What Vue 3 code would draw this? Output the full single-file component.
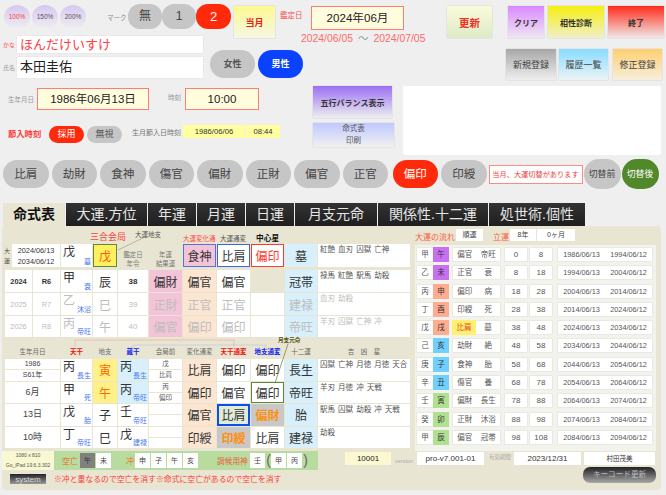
<script setup>
const stars = ['比肩', '劫財', '食神', '傷官', '偏財', '正財', '偏官', '正官', '偏印', '印綬']
const tabs = ['命式表', '大運.方位', '年運', '月運', '日運', '月支元命', '関係性.十二運', '処世術.個性']

// 年運の3行
const yearRows = [
  { year: '2024', wareki: 'R6', gan: '甲', un: '衰', zhi: '辰', age: '38', a: '偏財', b: '偏官', c: '偏官', e: '冠帯', lucky: '禄馬 紅艶 駅馬 劫殺', muted: false },
  { year: '2025', wareki: 'R7', gan: '乙', un: '沐浴', zhi: '巳', age: '39', a: '正財', b: '正官', c: '正官', e: '建禄', lucky: '血刃 劫殺', muted: true },
  { year: '2026', wareki: 'R8', gan: '丙', un: '帝旺', zhi: '午', age: '40', a: '偏官', b: '偏印', c: '偏印', e: '帝旺', lucky: '羊刃 囚獄 亡神 冲', muted: true }
]

// 命式本体
const birthRows = [
  { label: ['1986', 'S61年'], gan: '丙', un: '長生', zhi: '寅', zhiHot: true, zokan: '丙', zokanUn: '長生', zokanBlue: true, pre: ['戊', '比肩'], a: '比肩', b: '偏印', c: '偏印', e: '長生', lucky: '囚獄 亡神 月徳 月徳 天合' },
  { label: ['6月'], gan: '甲', un: '死', zhi: '午', zhiHot: true, zokan: '丙', zokanUn: '帝旺', zokanBlue: true, pre: ['丙', '偏印'], a: '偏印', b: '偏官', c: '偏印', cClass: 'green-box', e: '帝旺', lucky: '羊刃 月徳 冲 天戦' },
  { label: ['13日'], gan: '戊', un: '胎', zhi: '子', zokan: '壬', zokanUn: '帝旺', pre: ['', ''], a: '偏官', b: '比肩', bClass: 'blue-box', c: '偏財', cClass: 'hit', e: '胎', lucky: '駅馬 囚獄 劫殺 冲 天戦' },
  { label: ['10時'], gan: '丁', un: '帝旺', zhi: '巳', zokan: '戊', zokanUn: '建禄', pre: ['', ''], a: '印綬', b: '印綬', bClass: 'hit', c: '比肩', e: '建禄', lucky: '劫殺' }
]

// 大運の流れ
const flow = [
  ['甲', '午', 'purple', '偏官', '帝旺', 0, 8, '1986/06/13', '1994/06/12'],
  ['乙', '未', 'purple', '正官', '衰', 8, 18, '1994/06/13', '2004/06/12'],
  ['丙', '申', 'salmon', '偏印', '病', 18, 28, '2004/06/13', '2014/06/12'],
  ['丁', '酉', 'salmon', '印綬', '死', 28, 38, '2014/06/13', '2024/06/12'],
  ['戊', '戌', 'salmon', '比肩', '墓', 38, 48, '2024/06/13', '2034/06/12'],
  ['己', '亥', 'cyan', '劫財', '絶', 48, 58, '2034/06/13', '2044/06/12'],
  ['庚', '子', 'cyan', '食神', '胎', 58, 68, '2044/06/13', '2054/06/12'],
  ['辛', '丑', 'cyan', '傷官', '養', 68, 78, '2054/06/13', '2064/06/12'],
  ['壬', '寅', 'green', '偏財', '長生', 78, 88, '2064/06/13', '2074/06/12'],
  ['癸', '卯', 'green', '正財', '沐浴', 88, 98, '2074/06/13', '2084/06/12'],
  ['甲', '辰', 'green', '偏官', '冠帯', 98, 108, '2084/06/13', '2094/06/12']
]
</script>

<template>
  <div class="page">
    <!-- 上段 -->
    <div class="row-one">
      <div class="zoom-btn red-text">100%</div>
      <div class="zoom-btn">150%</div>
      <div class="zoom-btn">200%</div>
      <span class="mark-label">マーク</span>
      <div class="mark-seg">
        <span>無</span>
        <span>1</span>
        <span class="on">2</span>
      </div>
      <div class="btn this-month">当月</div>
      <span class="date-label">鑑定日</span>
      <div class="date-col">
        <div class="date-box">2024年06月</div>
        <div class="date-range">2024/06/05<i>～</i>2024/07/05</div>
      </div>
      <div class="btn refresh">更新</div>
      <div class="btn clear">クリア</div>
      <div class="btn match">相性診断</div>
      <div class="btn finish">終了</div>
    </div>

    <div class="row-two">
      <div class="names">
        <div class="name-line kana">
          <label>かな</label>
          <div class="name-input">ほんだけいすけ</div>
        </div>
        <div class="name-line kanji">
          <label>氏名</label>
          <div class="name-input">本田圭佑</div>
        </div>
      </div>
      <div class="gender">女性</div>
      <div class="gender male">男性</div>
      <div class="reg-btns">
        <div class="btn new">新規登録</div>
        <div class="btn history">履歴一覧</div>
        <div class="btn fix">修正登録</div>
      </div>
    </div>

    <div class="row-three">
      <div class="birth-col">
        <div class="birth-line">
          <span class="birth-label">生年月日</span>
          <div class="birth-box">1986年06月13日</div>
          <span class="time-label">時刻</span>
          <div class="time-box">10:00</div>
        </div>
        <div class="setsu-line">
          <span class="setsu-label">節入時刻</span>
          <span class="setsu-pill on">採用</span>
          <span class="setsu-pill">無視</span>
          <span class="setsu-sub">生月節入日時刻</span>
          <span class="setsu-date">1986/06/06</span>
          <span class="setsu-time">08:44</span>
        </div>
      </div>
      <div class="mid-col">
        <div class="btn gogyo">五行バランス表示</div>
        <div class="btn print">命式表<br />印刷</div>
      </div>
      <div class="memo"></div>
    </div>

    <div class="star-row">
      <div v-for="s in stars" :key="s" class="star-pill" :class="{ on: s === '偏印' }">{{ s }}</div>
      <div class="notice">当月、大運切替があります</div>
      <div class="switch">切替前</div>
      <div class="switch after">切替後</div>
    </div>

    <div class="tabs">
      <div v-for="(t, i) in tabs" :key="t" class="tab" :class="{ active: i === 0 }">{{ t }}</div>
    </div>

    <div class="panel">
      <svg class="lines" width="659" height="264">
        <polyline points="116,24 143,11" fill="none" stroke="#a0a090" stroke-width="0.7" />
        <polyline points="73,121 73,114 232,114 232,121" fill="none" stroke="#efb4a8" stroke-width="0.8" />
        <polyline points="131,124 131,119 264,119 264,124" fill="none" stroke="#c8c8e0" stroke-width="0.8" />
        <polyline points="286,118 273,157" fill="none" stroke="#7f8a52" stroke-width="0.8" />
      </svg>

      <div class="panel-main">
        <div class="left-area">
          <!-- 大運・年運 -->
          <div class="grid upper">
            <div class="cap sango">三合会局</div>
            <div class="cap chishi">大運地支</div>
            <div class="cap henka">大運変化通</div>
            <div class="cap tsuhen">大運通変</div>
            <div class="cap center-star">中心星</div>

            <div class="dayun-cell">
              <span class="dayun-label">大<br />運</span>
              <div class="dayun-dates">2024/06/13<br />2034/06/12</div>
            </div>
            <div class="cell gan first"><b>戊</b><small>墓</small></div>
            <div class="cell big first sango-box">戊</div>
            <div class="side-label first">鑑定日<br />年令</div>
            <div class="side-label first">年運<br />結果運</div>
            <div class="cell big first pink blue-line">食神</div>
            <div class="cell big first blue-box-thin">比肩</div>
            <div class="cell big first red-box">偏印</div>
            <div class="cell big first sky">墓</div>
            <div class="cell lucky first">紅艶 血刃 囚獄 亡神</div>

            <template v-for="r in yearRows" :key="r.year">
              <div class="cell num" :class="{ muted: r.muted }">{{ r.year }}</div>
              <div class="cell num" :class="{ muted: r.muted }">{{ r.wareki }}</div>
              <div class="cell gan" :class="{ muted: r.muted }"><b>{{ r.gan }}</b><small>{{ r.un }}</small></div>
              <div class="cell big" :class="{ muted: r.muted }">{{ r.zhi }}</div>
              <div class="cell num age" :class="{ muted: r.muted }">{{ r.age }}</div>
              <div class="cell big pink" :class="{ muted: r.muted }">{{ r.a }}</div>
              <div class="cell big peach" :class="{ muted: r.muted }">{{ r.b }}</div>
              <div class="cell big" :class="{ muted: r.muted }">{{ r.c }}</div>
              <div class="cell" :class="{ blank: !r.muted }"></div>
              <div class="cell big sky" :class="{ muted: r.muted }">{{ r.e }}</div>
              <div class="cell lucky" :class="{ muted: r.muted }">{{ r.lucky }}</div>
            </template>
          </div>

          <!-- 命式 -->
          <div class="grid lower">
            <div class="cap gesshi">月支元命</div>
            <div class="head wide">生年月日</div>
            <div class="head red">天干</div>
            <div class="head">地支</div>
            <div class="head blue">蔵干</div>
            <div class="head">会局前</div>
            <div class="head">変化通変</div>
            <div class="head red">天干通変</div>
            <div class="head blue">地支通変</div>
            <div class="head">十二運</div>
            <div class="head spaced">吉　凶　星</div>

            <template v-for="r in birthRows" :key="r.gan + r.zhi">
              <div class="date-part">
                <div v-for="l in r.label" :key="l" class="date-piece" :class="{ single: r.label.length === 1 }">{{ l }}</div>
              </div>
              <div class="cell gan"><b>{{ r.gan }}</b><small>{{ r.un }}</small></div>
              <div class="cell big" :class="{ hot: r.zhiHot }">{{ r.zhi }}</div>
              <div class="cell gan" :class="{ sky: r.zokanBlue }"><b>{{ r.zokan }}</b><small>{{ r.zokanUn }}</small></div>
              <div class="pre-part">
                <div v-for="(p, i) in r.pre" :key="i" class="pre-piece">{{ p }}</div>
              </div>
              <div class="cell big peach">{{ r.a }}</div>
              <div class="cell big" :class="r.bClass">{{ r.b }}</div>
              <div class="cell big" :class="r.cClass">{{ r.c }}</div>
              <div class="cell big sky">{{ r.e }}</div>
              <div class="cell lucky">{{ r.lucky }}</div>
            </template>
          </div>
        </div>

        <div class="right-area">
          <div class="flow-head">
            <span class="flow-label">大運の流れ</span>
            <span class="flow-val w27">順運</span>
            <span class="flow-label second">立運</span>
            <span class="flow-val w26">8年</span>
            <span class="flow-val w38">0ヶ月</span>
          </div>
          <div class="flow-list">
            <div v-for="f in flow" :key="f[7]" class="flow-row">
              <div class="chip pair">
                <span>{{ f[0] }}</span>
                <span class="zhi" :class="f[2]">{{ f[1] }}</span>
              </div>
              <div class="chip pair stars-pair">
                <span :class="{ 'star-hit': f[3] === '比肩' }">{{ f[3] }}</span>
                <span>{{ f[4] }}</span>
              </div>
              <div class="chip age-chip">{{ f[5] }}</div>
              <div class="chip age-chip second">{{ f[6] }}</div>
              <div class="chip dates">
                <span>{{ f[7] }}</span>
                <span>{{ f[8] }}</span>
              </div>
            </div>
          </div>
        </div>
      </div>

      <div class="panel-foot">
        <div class="foot-left">
          <div class="info-line">
            <div class="device">
              <div>1080 x 810</div>
              <div>Go_iPad 19.6.3.302</div>
            </div>
            <div class="kubo">
              <span class="kubo-label">空亡</span>
              <span class="kubo-cell dark">午</span>
              <span class="kubo-cell">未</span>
              <span class="kubo-label chu">冲</span>
              <span class="kubo-cell">申</span>
              <span class="kubo-cell">子</span>
              <span class="kubo-cell">午</span>
              <span class="kubo-cell">亥</span>
              <span class="kubo-sub">調候用神</span>
              <span class="kubo-cell">壬</span>
              <span class="paren">(</span>
              <span class="kubo-cell">甲</span>
              <span class="kubo-cell">丙</span>
              <span class="paren">)</span>
            </div>
          </div>
          <div class="note-line">
            <div class="system-btn">system</div>
            <div class="note">※冲と重なるので空亡を消す※命式に空亡があるので空亡を消す</div>
          </div>
        </div>
        <div class="foot-right">
          <div class="serial-line">
            <span class="serial">10001</span>
            <span class="tiny ver">version</span>
            <span class="plain ver-val">pro-v7.001-01</span>
            <span class="tiny limit">有効期限</span>
            <span class="plain limit-val">2023/12/31</span>
            <span class="plain owner">村田茂美</span>
          </div>
          <div class="key-btn">キーコード更新</div>
        </div>
      </div>
    </div>
  </div>
</template>

<style>
html,
body {
  margin: 0;
  background: #efefef;
  overflow: hidden;
}
</style>

<style scoped>
.page {
  width: 666px;
  height: 495px;
  overflow: hidden;
  background: #efefef;
  color: #333;
  font-family: "Liberation Sans", "Noto Sans CJK JP", sans-serif;
}
.btn {
  display: flex;
  align-items: center;
  justify-content: center;
  text-align: center;
  box-shadow: 0 0 1px rgba(0, 0, 0, 0.25);
}

/* 1段目 */
.row-one {
  display: flex;
  align-items: flex-start;
  height: 36px;
  padding-left: 4px;
  box-sizing: border-box;
}
.zoom-btn {
  width: 26px;
  height: 24px;
  margin: 5px 2px 0 0;
  border-radius: 50%;
  background: linear-gradient(#d6c8f2, #efeef0);
  font-size: 6.5px;
  line-height: 24px;
  text-align: center;
  color: #555;
}
.red-text {
  color: #ff3a3a;
}
.mark-label {
  margin: 12px 2px 0 19px;
  font-size: 6.5px;
  width: 19px;
  white-space: nowrap;
  color: #888;
}
.mark-seg {
  display: flex;
  margin-top: 4px;
  height: 25px;
}
.mark-seg span {
  width: 34px;
  background: #c6c6c6;
  border-radius: 12px;
  text-align: center;
  font-size: 12px;
  line-height: 25px;
  color: #444;
}
.mark-seg .on {
  width: 35px;
  background: #ff2a0c;
  font-size: 13px;
  color: #fff;
}
.this-month {
  width: 41px;
  height: 32px;
  margin: 6px 0 0 3px;
  background: linear-gradient(#fdf990, #f6f6e6);
  color: #e82020;
  font-size: 9px;
  font-weight: bold;
}
.date-label {
  width: 23px;
  margin: 9px 0 0 5px;
  font-size: 7.5px;
  white-space: nowrap;
  color: #f45050;
}
.date-col {
  width: 93px;
  margin: 6px 0 0 8px;
}
.date-box {
  height: 24px;
  box-sizing: border-box;
  border: 1px solid #ff7c70;
  background: #fffdde;
  font-size: 11.6px;
  line-height: 22px;
  text-align: center;
  color: #222;
}
.date-range {
  margin: 3px 0 0 -10px;
  white-space: nowrap;
  font-size: 10.4px;
  line-height: 12px;
  color: #ff6a6a;
}
.date-range i {
  margin: 0 5px;
  font-style: normal;
  color: #999;
}
.refresh {
  width: 45px;
  height: 32px;
  margin: 6px 0 0 43px;
  background: linear-gradient(#fbfbda, #dcebc8);
  color: #f03020;
  font-size: 10.5px;
  font-weight: bold;
}
.clear,
.match,
.finish {
  height: 32px;
  margin-top: 6px;
  font-size: 8px;
  font-weight: bold;
  color: #333;
}
.clear {
  width: 36px;
  margin-left: 16px;
  background: linear-gradient(#d98aff, #efe6f2);
}
.match {
  width: 56px;
  margin-left: 4px;
  background: linear-gradient(#f5ef10, #f0efc8);
}
.finish {
  width: 56px;
  margin-left: 4px;
  background: linear-gradient(#ff2c1c, #f0e8e6);
}

/* 2段目 */
.row-two {
  display: flex;
  align-items: flex-start;
  height: 44px;
}
.names {
  width: 203px;
}
.name-line {
  display: flex;
  align-items: center;
}
.name-line label {
  width: 17px;
  padding-left: 3px;
  box-sizing: border-box;
  font-size: 6px;
  white-space: nowrap;
  color: #999;
}
.name-input {
  flex: 1;
  padding-left: 3px;
  background: #fff;
  font-size: 13px;
  box-shadow: 0 0 1px rgba(0, 0, 0, 0.15);
  white-space: nowrap;
  overflow: hidden;
}
.kana label {
  color: #ff5050;
}
.kana .name-input {
  height: 17px;
  line-height: 18px;
  color: #ff4040;
}
.kanji {
  margin-top: 4px;
}
.kanji .name-input {
  height: 21px;
  line-height: 20px;
  color: #222;
}
.gender {
  width: 45px;
  height: 28px;
  margin: 14px 3px 0 0;
  background: #c6c6c6;
  border-radius: 14px;
  font-size: 9px;
  font-weight: bold;
  line-height: 28px;
  text-align: center;
  color: #555;
}
.names + .gender {
  margin-left: 7px;
}
.gender.male {
  background: #0a42ff;
  color: #fff;
}
.reg-btns {
  display: flex;
  margin: 13px 4px 0 auto;
  gap: 3px;
}
.reg-btns .btn {
  height: 31px;
  width: 49px;
  font-size: 9px;
  color: #444;
}
.reg-btns .new {
  width: 50px;
  background: linear-gradient(#a8a8a8, #eeeeee);
}
.history {
  background: linear-gradient(#88dcff, #ecf3f6);
}
.fix {
  margin-left: 2px;
  background: linear-gradient(#ffcf70, #f6efdc);
}

/* 3段目 */
.row-three {
  display: flex;
  margin-top: 6px;
  height: 69px;
}
.birth-col {
  width: 313px;
}
.birth-line {
  display: flex;
  align-items: center;
  margin-top: 2px;
  height: 22px;
}
.birth-label {
  width: 34px;
  margin-right: 3px;
  font-size: 6.5px;
  text-align: right;
  white-space: nowrap;
  color: #999;
}
.birth-box,
.time-box {
  box-sizing: border-box;
  height: 22px;
  border: 1px solid #ff7c70;
  background: #fffdde;
  font-size: 11.5px;
  line-height: 20px;
  text-align: center;
  color: #222;
}
.birth-box {
  width: 112px;
}
.time-label {
  margin: -4px 4px 0 19px;
  font-size: 6.5px;
  white-space: nowrap;
  color: #999;
}
.time-box {
  width: 74px;
}
.setsu-line {
  display: flex;
  align-items: flex-start;
  margin-top: 15px;
}
.setsu-label {
  width: 34px;
  margin: 2px 7px 0 8px;
  font-size: 8.3px;
  font-weight: bold;
  white-space: nowrap;
  color: #ff3a3a;
}
.setsu-pill {
  width: 35px;
  height: 17px;
  margin: 1px 3px 0 0;
  border-radius: 9px;
  background: #c6c6c6;
  font-size: 9px;
  line-height: 17px;
  text-align: center;
  color: #555;
}
.setsu-pill.on {
  background: #ff2a0c;
  color: #fff;
}
.setsu-sub {
  width: 51px;
  margin: 2px 0 0 7px;
  font-size: 7px;
  white-space: nowrap;
  color: #777;
}
.setsu-date,
.setsu-time {
  height: 13px;
  background: #ffffa0;
  font-size: 7.7px;
  line-height: 14px;
  text-align: center;
  color: #333;
}
.setsu-date {
  width: 62px;
  margin-right: 1px;
}
.setsu-time {
  width: 34px;
}
.mid-col {
  width: 81px;
}
.gogyo {
  width: 79px;
  height: 32px;
  background: linear-gradient(#9a70f2, #eeeef0);
  font-size: 8px;
  font-weight: bold;
  white-space: nowrap;
}
.print {
  margin-top: 5px;
  height: 24px;
  background: linear-gradient(#bfc8ff, #f1f1f1);
  font-size: 7.5px;
  line-height: 12px;
  color: #555;
}
.memo {
  width: 258px;
  margin-left: 9px;
  background: #fff;
  border-radius: 2px;
}

/* 通変星 */
.star-row {
  display: flex;
  align-items: center;
  height: 30px;
  margin-top: 4px;
  padding-left: 3px;
}
.star-pill {
  width: 45.5px;
  height: 28px;
  margin-right: 3px;
  border-radius: 14px;
  background: #c6c6c6;
  font-size: 11.5px;
  line-height: 28px;
  text-align: center;
  color: #444;
}
.star-pill.on {
  margin-left: 1.5px;
  background: #ff2a0c;
  color: #fff;
}
.notice {
  width: 94px;
  height: 19px;
  margin-left: -1px;
  box-sizing: border-box;
  border: 1px solid #ff8a80;
  background: #fff;
  font-size: 7.2px;
  line-height: 17px;
  text-align: center;
  white-space: nowrap;
  color: #f04040;
}
.switch {
  width: 37px;
  height: 30px;
  margin-left: 1px;
  border-radius: 15px;
  background: #c6c6c6;
  font-size: 8.8px;
  line-height: 30px;
  text-align: center;
  color: #444;
}
.switch.after {
  background: #50882a;
  color: #fff;
}

/* タブ */
.tabs {
  display: grid;
  grid-template-columns: 62px 81px 48px 48px 48px 82px 110px 96px;
  column-gap: 1px;
  height: 23px;
  margin: 14px 0 0 3px;
}
.tab {
  background: linear-gradient(#333, #1e1e1e);
  font-size: 14px;
  line-height: 23px;
  text-align: center;
  white-space: nowrap;
  color: #e6e6e6;
}
.tab.active {
  background: #e8e6d2;
  font-weight: bold;
  color: #111;
}

/* パネル */
.panel {
  position: relative;
  width: 659px;
  height: 264px;
  margin-left: 2px;
  background: #e8e6d2;
  border-radius: 4px;
}
.lines {
  position: absolute;
  left: 0;
  top: 0;
  z-index: 2;
  pointer-events: none;
}
.panel-main {
  display: flex;
  height: 225px;
  padding-left: 3px;
}
.left-area {
  width: 406px;
}
.grid {
  display: grid;
  grid-template-columns: 27px 27px 31px 24px 30px 33px 33px 33px 33px 32px 92px;
  gap: 1px;
}
.upper {
  grid-template-rows: 17px 25px 22px 22px 21px;
}
.lower {
  grid-template-rows: 7px 13px 21.5px 21.5px 21.5px 21.5px;
}
.cell {
  display: flex;
  align-items: center;
  justify-content: center;
  background: #fff;
  min-width: 0;
  color: #333;
}
.cell.first,
.side-label.first {
  height: 23px;
}
.big {
  font-size: 12px;
}
.num {
  font-size: 7.4px;
  font-weight: bold;
}
.age {
  font-size: 8px;
}
.muted {
  color: #bdbdbd;
  font-weight: normal;
}
.pink {
  background: #f3c4d8;
}
.peach {
  background: #fce6d2;
}
.sky {
  background: #d8f0fb;
}
.blank {
  background: transparent;
}
.hot {
  background: #fff088;
  color: #ff6a00;
}
.blue-line {
  box-sizing: border-box;
  border: 1px solid #5a70d8;
}
.blue-box-thin {
  box-sizing: border-box;
  border: 1px solid #3a68e0;
}
.red-box {
  box-sizing: border-box;
  border: 1.5px solid #ff3a30;
  color: #ff3a30;
}
.sango-box {
  box-sizing: border-box;
  border: 1.5px solid #5a8a3a;
  background: #fff060;
  color: #ff5a00;
}
.green-box {
  box-sizing: border-box;
  border: 1px solid #5a8a3a;
}
.blue-box {
  box-sizing: border-box;
  border: 2px solid #0a50e8;
  background: #e0ecd8;
}
.hit {
  background: #c8c8c8;
  color: #ff9010;
  font-weight: bold;
}
.gan {
  justify-content: space-between;
  padding: 0 1px 0 2px;
  box-sizing: border-box;
}
.gan b {
  align-self: flex-start;
  font-size: 12px;
  font-weight: normal;
  line-height: 17px;
}
.gan small {
  align-self: flex-end;
  font-size: 7px;
  line-height: 10px;
  white-space: nowrap;
  color: #4a78f0;
}
.gan.muted small {
  color: #4a78f0;
}
.lucky {
  justify-content: flex-start;
  align-items: flex-start;
  padding: 1px 0 0 2px;
  box-sizing: border-box;
  font-size: 7.5px;
  word-spacing: 1px;
  line-height: 10px;
  white-space: nowrap;
  color: #555;
}
.lucky.muted {
  color: #bdbdbd;
}
.cap {
  font-size: 6.5px;
  white-space: nowrap;
  color: #555;
  align-self: end;
}
.sango {
  grid-column: 4;
  margin-left: -3px;
  font-size: 9px;
  color: #ff4040;
}
.chishi {
  grid-column: 5;
  align-self: start;
  margin: 3px 0 0 17px;
}
.henka {
  grid-column: 7;
  color: #ff4a4a;
}
.tsuhen {
  grid-column: 8;
  margin-left: 3px;
}
.center-star {
  grid-column: 9;
  margin-left: 5px;
  font-size: 7.7px;
  font-weight: bold;
  color: #111;
}
.gesshi {
  grid-column: 1 / -1;
  margin-left: 273px;
  font-size: 5.6px;
  font-weight: bold;
  color: #555520;
  line-height: 7px;
}
.dayun-cell {
  grid-column: 1 / span 2;
  display: flex;
  height: 23px;
  margin-left: -1px;
}
.dayun-label {
  width: 8px;
  font-size: 6px;
  line-height: 10px;
  padding-top: 2px;
  color: #444;
}
.dayun-dates {
  flex: 1;
  background: #fff;
  font-size: 7.3px;
  line-height: 11px;
  padding-top: 1px;
  text-align: center;
  color: #333;
}
.side-label {
  padding-top: 6px;
  box-sizing: border-box;
  font-size: 6.4px;
  line-height: 9px;
  text-align: center;
  white-space: nowrap;
  color: #777;
}
.head {
  font-size: 6.5px;
  line-height: 13px;
  text-align: center;
  white-space: nowrap;
  color: #666;
}
.head.wide {
  grid-column: 1 / span 2;
}
.head.red {
  color: #f01010;
  font-weight: bold;
}
.head.blue {
  color: #1020f0;
  font-weight: bold;
}
.date-part {
  grid-column: 1 / span 2;
  display: flex;
  flex-direction: column;
  gap: 1px;
}
.date-piece {
  flex: 1;
  background: #fff;
  font-size: 7px;
  line-height: 10px;
  text-align: center;
  color: #444;
}
.date-piece.single {
  font-size: 9px;
  line-height: 20px;
}
.pre-part {
  display: flex;
  flex-direction: column;
  gap: 1px;
}
.pre-piece {
  flex: 1;
  background: #fff;
  font-size: 6.5px;
  line-height: 10px;
  text-align: center;
  color: #555;
}

/* 大運の流れ */
.right-area {
  width: 241px;
  margin-left: 4px;
}
.flow-head {
  display: flex;
  align-items: center;
  height: 12px;
  margin-top: 3px;
}
.flow-label {
  width: 41px;
  margin-top: 3px;
  font-size: 8px;
  white-space: nowrap;
  color: #ff5a40;
}
.flow-label.second {
  width: 17px;
  margin-left: 10px;
}
.flow-val {
  height: 12px;
  background: #fff;
  font-size: 7px;
  line-height: 12px;
  text-align: center;
  color: #444;
}
.w27 {
  width: 27px;
}
.w26 {
  width: 26px;
  margin-right: 1px;
}
.w38 {
  width: 38px;
}
.flow-list {
  margin-top: 4px;
  padding: 2px 0 3px 1px;
  background: #f3f3ee;
}
.flow-row {
  display: flex;
  height: 15px;
  margin-bottom: 3.3px;
}
.chip {
  box-sizing: border-box;
  background: #fff;
  border: 1px solid #e9e9e4;
  border-radius: 1px;
  font-size: 7.5px;
  line-height: 13px;
  text-align: center;
  color: #555;
}
.pair {
  display: flex;
  width: 33px;
}
.pair span {
  flex: 1;
}
.zhi {
  margin: -1px -1px -1px 0;
  line-height: 15px;
  color: #333;
}
.purple {
  background: #c870f0;
}
.salmon {
  background: #ffac90;
}
.cyan {
  background: #70d0ff;
}
.green {
  background: #b0e090;
}
.stars-pair {
  width: 49px;
  margin-left: 3px;
}
.star-hit {
  margin: -1px 0 -1px -1px;
  line-height: 15px;
  background: #fff070;
  color: #f04020;
}
.age-chip {
  width: 24px;
  margin-left: 3px;
  font-size: 8px;
}
.age-chip.second {
  margin-left: 1px;
}
.dates {
  display: flex;
  width: 96px;
  margin-left: 4px;
  font-size: 7.3px;
}
.dates span {
  flex: 1;
}

/* 下段 */
.panel-foot {
  display: flex;
}
.foot-left {
  width: 316px;
}
.info-line {
  display: flex;
  height: 19px;
}
.device {
  width: 52px;
  font-size: 5px;
  line-height: 9.5px;
  text-align: center;
  white-space: nowrap;
  color: #555;
  background: #f8f8d2;
}
.kubo {
  display: flex;
  align-items: center;
  flex: 1;
  padding-left: 8px;
  background: #b8dca0;
}
.kubo-label {
  width: 18px;
  font-size: 8px;
  white-space: nowrap;
  color: #f06a20;
}
.kubo-label.chu {
  width: 9px;
  margin-left: 14px;
  font-size: 8px;
}
.kubo-cell {
  width: 15px;
  height: 15px;
  margin-right: 1px;
  background: #fff;
  font-size: 7px;
  line-height: 15px;
  text-align: center;
  color: #444;
}
.kubo-cell.dark {
  background: #808080;
  color: #333;
}
.kubo-sub {
  width: 32px;
  margin: 0 1px 0 18px;
  font-size: 7.7px;
  white-space: nowrap;
  color: #e8603a;
}
.paren {
  width: 5px;
  font-size: 14px;
  line-height: 15px;
  text-align: center;
  color: #666;
}
.note-line {
  display: flex;
  align-items: center;
  margin-top: 3px;
}
.system-btn {
  width: 36px;
  height: 10px;
  margin-left: 8px;
  background: linear-gradient(#222, #999);
  font-size: 8px;
  line-height: 11px;
  text-align: center;
  color: #ddd;
}
.note {
  margin-left: 8px;
  font-size: 7.85px;
  white-space: nowrap;
  color: #ff3a3a;
}
.foot-right {
  width: 311px;
  margin-left: 27px;
}
.serial-line {
  display: flex;
  align-items: center;
  height: 13px;
  margin-top: 1px;
}
.serial {
  width: 46px;
  height: 13px;
  background: #fbf8d2;
  font-size: 8px;
  line-height: 13px;
  text-align: center;
  color: #222;
}
.tiny {
  font-size: 5.5px;
  white-space: nowrap;
  color: #aaa;
}
.ver {
  width: 22px;
  margin: 4px 0 0 4px;
}
.limit {
  width: 25px;
  margin: -3px 0 0 5px;
}
.plain {
  height: 13px;
  background: #fff;
  font-size: 8px;
  line-height: 13px;
  text-align: center;
  white-space: nowrap;
  color: #333;
}
.ver-val {
  width: 67px;
}
.limit-val {
  width: 67px;
}
.owner {
  width: 71px;
  margin-left: 3px;
  font-size: 6.5px;
}
.key-btn {
  width: 73px;
  height: 16px;
  margin: 2px 0 0 238px;
  border-radius: 7px;
  background: linear-gradient(#222, #a8a8a8);
  font-size: 7.6px;
  line-height: 16px;
  text-align: center;
  white-space: nowrap;
  color: #bbb;
}
</style>
